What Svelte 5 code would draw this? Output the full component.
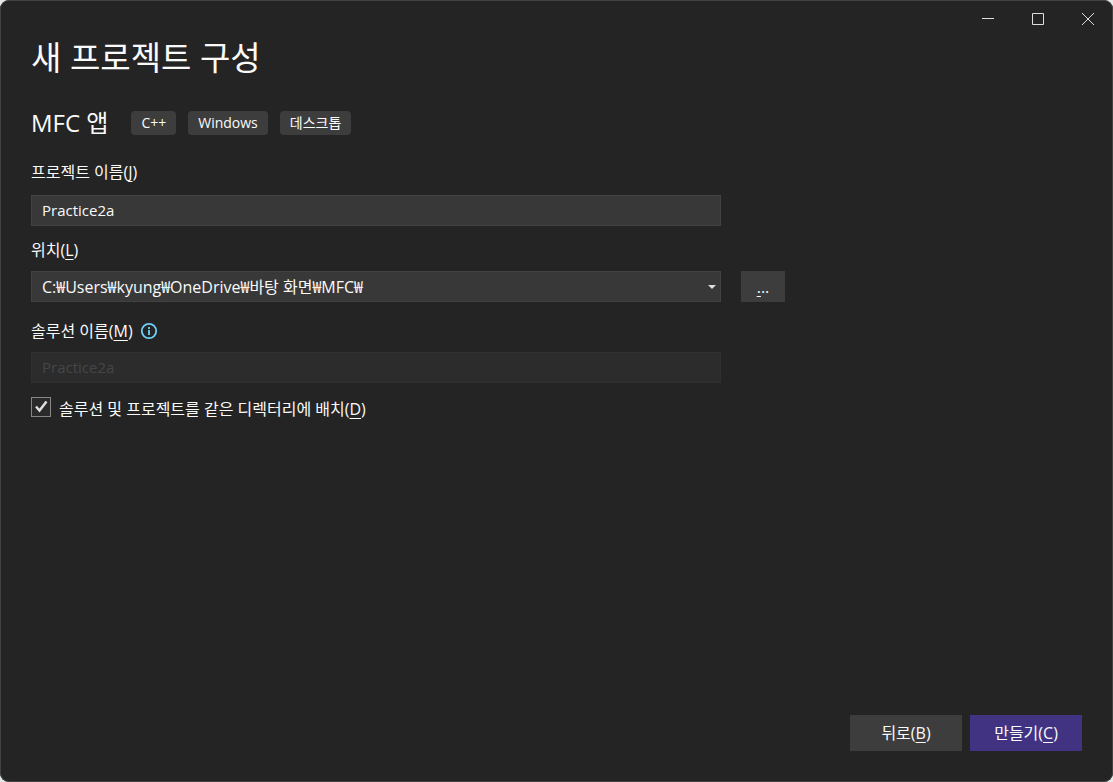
<script lang="ts">
const tags = ['C++', 'Windows', '데스크톱'];
const locations = ['C:₩Users₩kyung₩OneDrive₩바탕 화면₩MFC₩'];

let projectName = $state('Practice2a');
let location = $state(locations[0]);
let sameDirectory = $state(true);
let customSolution = $state('');

// The solution follows the project while both share a directory
const solutionName = $derived(sameDirectory ? projectName : customSolution || projectName);
</script>

<div class="window">
	<header class="title-bar">
		<button type="button" aria-label="최소화">
			<svg viewBox="0 0 14 14"><path d="M1 6.5h12" /></svg>
		</button>
		<button type="button" aria-label="최대화">
			<svg viewBox="0 0 14 14"><path d="M1.5 1.5h11v11h-11z" /></svg>
		</button>
		<button type="button" aria-label="닫기">
			<svg viewBox="0 0 14 14"><path d="M1 1l12 12M13 1L1 13" /></svg>
		</button>
	</header>

	<form onsubmit={(e) => e.preventDefault()}>
		<h1>새 프로젝트 구성</h1>

		<div class="template">
			<h2>MFC 앱</h2>
			<ul class="tags">
				{#each tags as tag}
					<li>{tag}</li>
				{/each}
			</ul>
		</div>

		<div class="fields">
			<label for="project-name">프로젝트 이름(<u>J</u>)</label>
			<input id="project-name" class="field" type="text" autocomplete="off" spellcheck="false" bind:value={projectName} />

			<label for="location">위치(<u>L</u>)</label>
			<div class="combo">
				<select id="location" class="field" bind:value={location}>
					{#each locations as path}
						<option>{path}</option>
					{/each}
				</select>
				<svg class="arrow" viewBox="0 0 8 4"><path d="M0 0h8L4 4z" /></svg>
			</div>
			<button type="button" class="browse" aria-label="찾아보기"><span><u>.</u>..</span></button>

			<div class="label-row">
				<label for="solution-name">솔루션 이름(<u>M</u>)</label>
				<svg class="info" viewBox="0 0 18 18">
					<circle cx="9" cy="9" r="7.2" />
					<path d="M9 8v5M9 5v2" />
				</svg>
			</div>
			<input
				id="solution-name"
				class="field"
				type="text"
				value={solutionName}
				disabled={sameDirectory}
				oninput={(e) => (customSolution = e.currentTarget.value)}
			/>
		</div>

		<label class="check">
			<span class="box">
				<input type="checkbox" bind:checked={sameDirectory} />
				<svg viewBox="0 0 20 20"><path d="M5 9.500l3.500 4L15.500 4.500" /></svg>
			</span>
			<span class="check-text">솔루션 및 프로젝트를 같은 디렉터리에 배치(<u>D</u>)</span>
		</label>

		<footer>
			<button type="button">뒤로(<u>B</u>)</button>
			<button type="submit" class="primary">만들기(<u>C</u>)</button>
		</footer>
	</form>
</div>

<style>
	:global(body) {
		background: #e4e8e6;
	}

	.window {
		--border: #424242;

		display: flex;
		flex-direction: column;
		box-sizing: border-box;
		min-height: 100vh;
		background: #242424;
		border-radius: 9px;
		box-shadow: inset 0 0 0 1px var(--border);
		color: #fafafa;
		font: 16px/20px "Open Sans", "Noto Sans CJK KR", sans-serif;
	}

	button,
	input,
	select {
		box-sizing: border-box;
		margin: 0;
		font: inherit;
		color: inherit;
	}

	button {
		border: none;
		padding: 0;
		background: #3d3d3d;
	}

	u {
		text-decoration-thickness: 1px;
		text-underline-offset: 3px;
	}

	.title-bar {
		display: flex;
		justify-content: flex-end;

		button {
			display: grid;
			place-items: center;
			width: 50px;
			height: 38px;
			background: none;
		}

		svg {
			width: 14px;
			height: 14px;
			fill: none;
			stroke: #dedede;
		}
	}

	form {
		flex: 1;
		display: flex;
		flex-direction: column;
		padding: 0 31px 31px;
	}

	h1,
	h2 {
		margin: 0;
		font-weight: 400;
	}

	h1 {
		font-size: 33px;
		line-height: 40px;
	}

	.template {
		display: flex;
		align-items: center;
		gap: 23px;
		margin-top: 29px;
	}

	h2 {
		font-size: 24px;
		line-height: 32px;
	}

	.tags {
		display: flex;
		gap: 12px;
		margin: 0;
		padding: 0;
		list-style: none;
		font-size: 14px;

		li {
			padding: 2px 10px;
			border-radius: 4px;
			background: #3d3d3d;
		}
	}

	.fields {
		display: grid;
		grid-template-columns: minmax(0, 1fr) 44px;
		column-gap: 20px;
		max-width: 754px;
		margin-top: 23px;

		> * {
			grid-column: 1;
		}
	}

	.field {
		width: 100%;
		height: 31px;
		margin: 13px 0 14px;
		padding: 0 10px;
		border: 1px solid var(--border);
		border-radius: 0;
		background: #383838;
		font-size: 15px;
		appearance: none;

		&:disabled {
			margin: 11px 0 14px;
			border-color: #303030;
			background: #2c2c2c;
			color: #464646;
			opacity: 1;
		}
	}

	input.field {
		padding-bottom: 2px;
	}

	.combo {
		display: grid;
		align-items: center;

		.field,
		.arrow {
			grid-area: 1 / 1;
		}

		.field {
			margin: 11px 0 19px;
			font-size: 16px;
		}
	}

	.arrow {
		justify-self: end;
		width: 8px;
		height: 4px;
		margin: 0 5px 8px 0;
		fill: #dedede;
		pointer-events: none;
	}

	.fields > .browse {
		grid-column: 2;
		grid-row: 4;
		height: 31px;
		margin-top: 11px;
	}

	.label-row {
		display: flex;
		align-items: center;
		gap: 7px;
	}

	.info {
		width: 18px;
		height: 18px;
		fill: none;
		stroke: #6fd0f5;
		stroke-width: 1.8;

		/* the dot and the stem of the "i" */
		path {
			stroke: #6fd0f5;
		}
	}

	.check {
		display: flex;
		gap: 8px;
		align-self: flex-start;
	}

	.check-text {
		padding-top: 2px;
	}

	.box {
		display: grid;
		width: 20px;
		height: 20px;

		input,
		svg {
			grid-area: 1 / 1;
			width: 20px;
			height: 20px;
		}

		input {
			appearance: none;
			border: 1px solid #868686;
			background: #2a2a2a;
		}

		svg {
			visibility: hidden;
			fill: none;
			stroke: #e0e0e0;
			stroke-width: 2.4;
			pointer-events: none;
		}

		input:checked + svg {
			visibility: visible;
		}
	}

	footer {
		display: flex;
		justify-content: flex-end;
		gap: 8px;
		margin-top: auto;

		button {
			width: 112px;
			height: 36px;
		}

		.primary {
			background: #413282;
		}
	}
</style>
